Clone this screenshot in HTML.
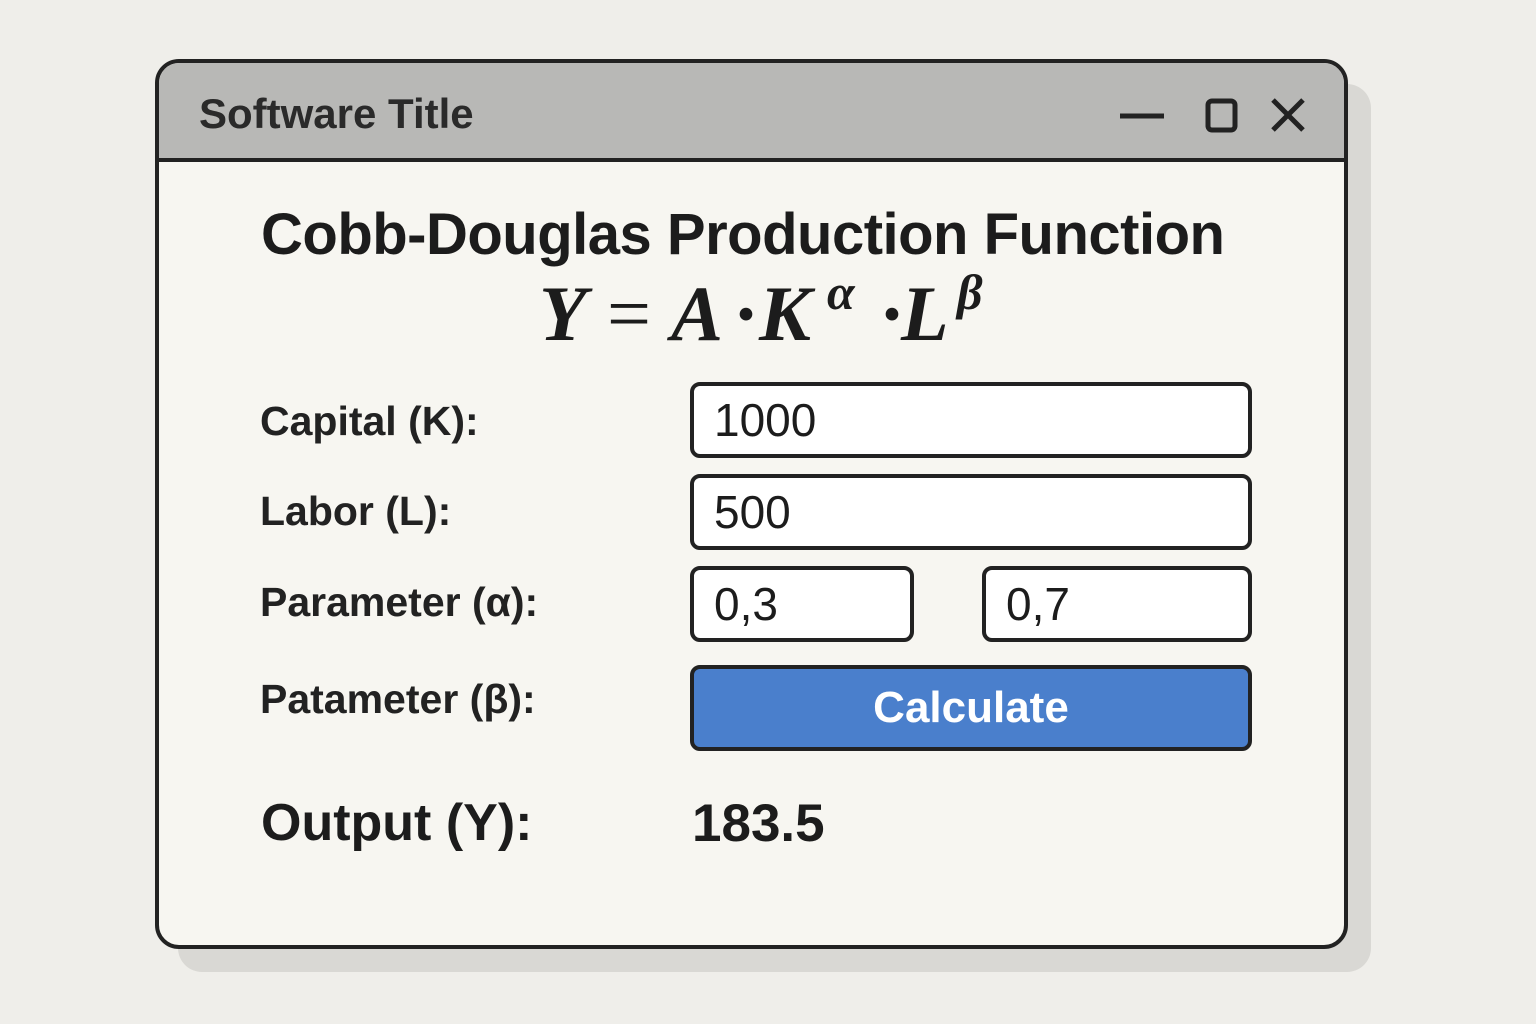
<!DOCTYPE html>
<html><head><style>
body{margin:0;width:1536px;height:1024px;background:#efeeea;position:relative;font-family:"Liberation Sans",sans-serif;color:#1c1c1c;overflow:hidden}
.shadow{position:absolute;left:178px;top:84px;width:1193px;height:888px;background:#d9d8d4;border-radius:24px}
.win{position:absolute;left:155px;top:59px;width:1185px;height:882px;border:4px solid #222;border-radius:24px;background:#f7f6f1;overflow:hidden}
.tb{position:absolute;left:0;top:0;right:0;height:95px;background:#b8b8b6;border-bottom:4px solid #222}
.tt{position:absolute;left:40px;top:27px;font-size:42px;font-weight:bold;color:#2a2a2a}
.a{position:absolute}
.lbl{position:absolute;left:101px;font-size:41px;font-weight:bold;color:#222}
.inp{position:absolute;border:4px solid #222;border-radius:10px;background:#fff;font-size:46px;box-sizing:border-box;padding-left:20px;display:flex;align-items:center}
.f{position:absolute;font-family:'Liberation Serif',serif;font-style:italic;font-weight:bold;font-size:78px;top:206px}
.s{position:absolute;font-family:'Liberation Serif',serif;font-style:italic;font-weight:bold;font-size:50px;top:200px}
</style></head><body>
<div class="shadow"></div>
<div class="win">
<div class="tb"><div class="tt">Software Title</div>
<svg class="a" style="left:955px;top:30px" width="200" height="45" viewBox="0 0 200 45">
<line x1="6" y1="23" x2="50" y2="23" stroke="#222" stroke-width="5"/>
<rect x="94" y="8" width="27" height="29" rx="4" fill="none" stroke="#222" stroke-width="5"/>
<path d="M159 7 L189 37 M189 7 L159 37" stroke="#222" stroke-width="5"/>
</svg></div>
<div class="a" style="left:102px;top:138px;font-size:58px;font-weight:bold;letter-spacing:-0.5px">Cobb-Douglas Production Function</div>
<div class="f" style="left:380px">Y</div>
<div class="f" style="left:448px;font-style:normal;font-weight:normal">=</div>
<div class="f" style="left:512px">A</div>
<div class="f" style="left:574px;font-style:normal">·</div>
<div class="f" style="left:600px">K</div>
<div class="s" style="left:668px">α</div>
<div class="f" style="left:720px;font-style:normal">·</div>
<div class="f" style="left:742px">L</div>
<div class="s" style="left:798px">β</div>
<div class="lbl" style="top:335px">Capital (K):</div>
<div class="lbl" style="top:425px">Labor (L):</div>
<div class="lbl" style="top:516px">Parameter (α):</div>
<div class="lbl" style="top:613px">Patameter (β):</div>
<div class="inp" style="left:531px;top:319px;width:562px;height:76px">1000</div>
<div class="inp" style="left:531px;top:411px;width:562px;height:76px">500</div>
<div class="inp" style="left:531px;top:503px;width:224px;height:76px">0,3</div>
<div class="inp" style="left:823px;top:503px;width:270px;height:76px">0,7</div>
<div class="inp" style="left:531px;top:602px;width:562px;height:86px;background:#4a7fcc;color:#fff;justify-content:center;padding:0;font-size:44px;font-weight:bold">Calculate</div>
<div class="a" style="left:102px;top:730px;font-size:52px;font-weight:bold">Output (Y):</div>
<div class="a" style="left:533px;top:730px;font-size:53px;font-weight:bold">183.5</div>
</div>
</body></html>
